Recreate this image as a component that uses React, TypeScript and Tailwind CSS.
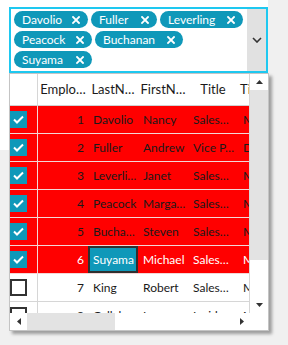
const chips = [
  { name: "Davolio", w: "w-[74px]" },
  { name: "Fuller", w: "w-[66px]" },
  { name: "Leverling", w: "w-[83px]" },
  { name: "Peacock", w: "w-[78px]" },
  { name: "Buchanan", w: "w-[88px]" },
  { name: "Suyama", w: "w-[78px]" },
]

const headers = ["Emplo…", "LastN…", "FirstN…", "Title", "TitleOfCourtesy"]

const rows = [
  { id: 1, last: "Davolio", first: "Nancy", title: "Sales…", toc: "Ms.", checked: true },
  { id: 2, last: "Fuller", first: "Andrew", title: "Vice P…", toc: "Dr.", checked: true },
  { id: 3, last: "Leverli…", first: "Janet", title: "Sales…", toc: "Ms.", checked: true },
  { id: 4, last: "Peacock", first: "Marga…", title: "Sales…", toc: "Mrs.", checked: true },
  { id: 5, last: "Bucha…", first: "Steven", title: "Sales…", toc: "Mr.", checked: true },
  { id: 6, last: "Suyama", first: "Michael", title: "Sales…", toc: "Mr.", checked: true, current: true },
  { id: 7, last: "King", first: "Robert", title: "Sales…", toc: "Mr.", checked: false },
  { id: 8, last: "Callahan", first: "Laura", title: "Inside…", toc: "Ms.", checked: false },
]

function CloseIcon() {
  return (
    <svg width="8" height="8" viewBox="0 0 8 8" className="shrink-0">
      <path d="M1 1 L7 7 M7 1 L1 7" stroke="white" strokeWidth="1.8" strokeLinecap="square" />
    </svg>
  )
}

function Checkbox({ checked }: { checked: boolean }) {
  if (!checked) {
    return <div className="w-[17px] h-[17px] border-2 border-[#333333] bg-white" />
  }
  return (
    <div className="w-[17px] h-[17px] bg-[#0f98b9] flex items-center justify-center">
      <svg width="17" height="17" viewBox="0 0 17 17">
        <path d="M4 8.5 L7 11.5 L13 5.5" stroke="white" strokeWidth="2" fill="none" />
      </svg>
    </div>
  )
}

function Arrow({ dir }: { dir: "up" | "down" | "left" | "right" }) {
  const d = {
    up: "M0 4 L3.5 0 L7 4 Z",
    down: "M0 0 L7 0 L3.5 4 Z",
    left: "M4 0 L4 7 L0 3.5 Z",
    right: "M0 0 L4 3.5 L0 7 Z",
  }[dir]
  const horiz = dir === "up" || dir === "down"
  return (
    <svg width={horiz ? 7 : 4} height={horiz ? 4 : 7} viewBox={horiz ? "0 0 7 4" : "0 0 4 7"}>
      <path d={d} fill="#333333" />
    </svg>
  )
}

export default function App() {
  return (
    <div className="relative w-[288px] h-[345px] bg-[#f0f0f0] overflow-hidden font-['Lato',sans-serif] text-[12px] text-[#1a1a1a]">
      {/* Window */}
      <div className="w-[268px] h-[150px] bg-white pl-[9px] pt-[7px]">
        {/* Combo box */}
        <div className="w-[259px] h-[66px] border-2 border-[#1ec8f0] flex bg-white">
          <div className="flex-1 pl-[3px] pt-[2px] flex flex-wrap content-start gap-[3px]">
            {chips.map((c) => (
              <div
                key={c.name}
                className={`${c.w} h-[17px] rounded-full bg-[#0f98b9] text-white flex items-center justify-between px-[8px] leading-none`}
              >
                <span>{c.name}</span>
                <CloseIcon />
              </div>
            ))}
          </div>
          <div className="w-[19px] bg-[#e1e1e1] flex items-center justify-center">
            <svg width="10" height="6" viewBox="0 0 10 6">
              <polyline points="1,1 5,5 9,1" stroke="#333333" strokeWidth="1.6" fill="none" />
            </svg>
          </div>
        </div>
      </div>

      {/* Dropdown popup */}
      <div className="absolute left-[9px] top-[73px] w-[260px] h-[258px] border border-[#c4c4c4] bg-white shadow-[3px_3px_3px_rgba(0,0,0,0.35)] flex flex-col">
        <div className="flex h-[239px]">
          {/* Grid */}
          <div className="w-[240px] h-[239px] overflow-hidden border-r border-[#d6d6d6]">
            <div className="flex h-[32px] border-b border-[#d0d0d0] w-[300px]">
              <div className="w-[28px] border-r border-[#d6d6d6]" />
              {headers.map((h) => (
                <div
                  key={h}
                  className="w-[50px] shrink-0 px-[2px] leading-[31px] text-center whitespace-nowrap overflow-hidden text-[13px]"
                >
                  {h}
                </div>
              ))}
            </div>
            {rows.map((r) => {
              const red = r.checked
              const textCol = r.current ? "text-white" : "text-[#1a1a1a]"
              return (
                <div
                  key={r.id}
                  className={`flex h-[28px] w-[300px] border-b ${red ? "bg-[#ff0000] border-[#f3d6d6]" : "bg-white border-[#d6d6d6]"} ${textCol}`}
                >
                  <div className={`w-[28px] shrink-0 border-r ${red ? "border-[#f3d6d6]" : "border-[#d6d6d6]"} flex items-center`}>
                    <Checkbox checked={r.checked} />
                  </div>
                  <div className="w-[50px] shrink-0 pr-[4px] flex items-center justify-end">{r.id}</div>
                  {r.current ? (
                    <div className="w-[50px] shrink-0 border-2 border-[#2f2f2f] bg-[#0f98b9] text-white pl-[3px] flex items-center whitespace-nowrap overflow-hidden">
                      {r.last}
                    </div>
                  ) : (
                    <div className="w-[50px] shrink-0 pl-[5px] flex items-center whitespace-nowrap overflow-hidden">{r.last}</div>
                  )}
                  {[r.first, r.title, r.toc].map((v, i) => (
                    <div key={i} className="w-[50px] shrink-0 pl-[5px] flex items-center whitespace-nowrap overflow-hidden">
                      {v}
                    </div>
                  ))}
                </div>
              )
            })}
          </div>
          {/* Vertical scrollbar */}
          <div className="w-[18px] flex flex-col">
            <div className="h-[16px] bg-white flex items-center justify-center">
              <Arrow dir="up" />
            </div>
            <div className="h-[170px] bg-[#e3e3e3]" />
            <div className="flex-1 bg-white" />
            <div className="h-[17px] bg-white flex items-center justify-center">
              <Arrow dir="down" />
            </div>
          </div>
        </div>
        {/* Horizontal scrollbar */}
        <div className="flex h-[17px]">
          <div className="w-[17px] bg-white flex items-center justify-center">
            <Arrow dir="left" />
          </div>
          <div className="w-[88px] bg-[#e3e3e3]" />
          <div className="flex-1 bg-white" />
          <div className="w-[17px] bg-white flex items-center justify-center">
            <Arrow dir="right" />
          </div>
          <div className="w-[18px] bg-white" />
        </div>
      </div>
    </div>
  )
}
